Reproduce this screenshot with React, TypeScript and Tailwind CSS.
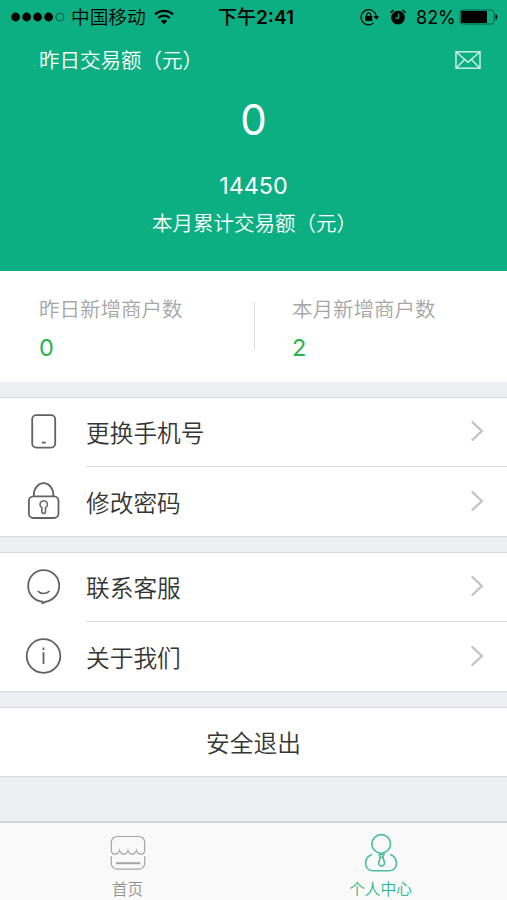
import React from "react";

const Chevron: React.FC = () => (
  <svg className="w-[14px] h-[22px] mr-[23px] mb-[2px]" viewBox="0 0 14 22" fill="none" stroke="#c3c3c5" strokeWidth="2.4">
    <path d="M1.8 1.5 11.8 11 1.8 20.5" />
  </svg>
);

const PhoneIcon: React.FC = () => (
  <svg className="w-[40px] h-[40px]" viewBox="0 0 40 40" fill="none" stroke="#626262" strokeWidth="1.8">
    <rect x="9.2" y="3.2" width="23" height="32.4" rx="4" />
    <path d="M18.7 30.6h4" />
  </svg>
);

const LockIcon: React.FC = () => (
  <svg className="w-[40px] h-[40px]" viewBox="0 0 40 40" fill="none" stroke="#626262" strokeWidth="1.8">
    <rect x="5.9" y="15.4" width="29.6" height="21.6" rx="4.5" />
    <path d="M10.8 15.4v-1.5a9.8 11.7 0 0 1 19.6 0v1.5" />
    <path d="M18.9 26.6a3.7 3.7 0 1 1 3.6 0v4a1.8 1.8 0 0 1-3.6 0z" strokeWidth="1.5" />
  </svg>
);

const ServiceIcon: React.FC = () => (
  <svg className="w-[40px] h-[40px]" viewBox="0 0 40 40" fill="none" stroke="#626262" strokeWidth="1.8">
    <path d="M19.5 36.2v-1.5C11 33.9 5.2 27.4 5.2 19 5.2 9.9 12 3.1 20.6 3.1s15.6 6.8 15.6 15.9c0 7.8-5.6 14-13 15.6z" />
    <path d="M14.7 24c2.7 3.2 9 3.2 11.8 0" strokeWidth="1.5" />
  </svg>
);

const InfoIcon: React.FC = () => (
  <svg className="w-[40px] h-[40px]" viewBox="0 0 40 40" fill="none" stroke="#626262" strokeWidth="1.8">
    <circle cx="20.5" cy="20" r="16.8" />
    <path d="M20.5 16.3v11.8M20.5 11.6v2.3" />
  </svg>
);

const StatusBar: React.FC = () => (
  <div className="flex items-center h-[34px] text-black">
    <svg className="w-[54px] h-[12px] ml-[11px] shrink-0" viewBox="0 0 54 12">
      <circle cx="4.6" cy="6" r="4.4" />
      <circle cx="15.6" cy="6" r="4.4" />
      <circle cx="26.6" cy="6" r="4.4" />
      <circle cx="37.6" cy="6" r="4.4" />
      <circle cx="48.8" cy="6" r="4" fill="none" stroke="#075b46" strokeWidth="1" />
    </svg>
    <span className="ml-[6px] w-[76px] pt-[2px] text-[18.7px] leading-[34px] font-[350] whitespace-nowrap">中国移动</span>
    <svg className="w-[20px] h-[16px] ml-[7px] shrink-0" viewBox="0 0 20 16" fill="none" stroke="black" strokeWidth="2.3">
      <path d="M1 5.4a13 13 0 0 1 18 0M4.3 9a8.2 8.2 0 0 1 11.4 0" />
      <path d="M10 15.2 6.8 12a4.6 4.6 0 0 1 6.4 0z" fill="black" stroke="none" />
    </svg>
    <span className="ml-[44px] w-[80px] pt-[2px] text-[19px] font-medium leading-[34px] whitespace-nowrap">
      下午<span className="font-semibold">2:41</span>
    </span>
    <svg className="w-[20px] h-[18px] ml-[62px] shrink-0" viewBox="0 0 20 18" fill="none" stroke="black" strokeWidth="1.2">
      <path d="M13.8 14.9A7.6 7.6 0 1 1 16.3 9" />
      <path d="M13.4 8.3h5.8l-2.9 3.4z" fill="black" stroke="none" />
      <rect x="5.2" y="8" width="7" height="5" fill="black" stroke="none" />
      <path d="M6.8 8V6.7a1.9 1.9 0 0 1 3.8 0V8" />
    </svg>
    <svg className="w-[18px] h-[18px] ml-[9px] shrink-0" viewBox="0 0 18 18">
      <circle cx="9" cy="9.7" r="6.9" />
      <path d="M1.6 4.6 4.5 2M16.4 4.6 13.5 2" stroke="black" strokeWidth="1.6" />
      <path d="M9.6 5.6v4.5H6.2" fill="none" stroke="#0caf81" strokeWidth="1.3" />
    </svg>
    <span className="ml-[9px] w-[40px] pt-[1px] text-[18px] leading-[34px]">82%</span>
    <svg className="w-[40px] h-[16px] ml-[3px] shrink-0" viewBox="0 0 40 16">
      <rect x="1" y="1" width="34" height="14" rx="2.5" fill="none" stroke="#075b46" strokeWidth="1" />
      <rect x="2" y="2" width="26" height="12" rx="1" />
      <path d="M36.5 5.2c2.6.5 2.6 5.1 0 5.6z" />
    </svg>
  </div>
);

const Summary: React.FC = () => (
  <header className="flex flex-col h-[271px] bg-[#0caf81] text-white">
    <StatusBar />
    <div className="flex items-center justify-between h-[50px] pl-[39px] pr-[26px]">
      <h1 className="font-['Noto_Sans_CJK_SC',sans-serif] text-[20.5px] leading-[50px] font-[350]">昨日交易额（元）</h1>
      <svg className="w-[26px] h-[20px] mt-[1px]" viewBox="0 0 26 20" fill="none" stroke="#d5f4ea" strokeWidth="1.4">
        <rect x="1" y="1.8" width="24" height="16.4" />
        <path d="M1 1.8 13 12.2 25 1.8M1 18.2 9.6 9.4M25 18.2 16.4 9.4" />
      </svg>
    </div>
    <div className="mt-[9px] h-[52px] text-center text-[42px] leading-[54px] font-normal">0</div>
    <div className="mt-[24px] h-[32px] text-center text-[23.3px] leading-[33px]">14450</div>
    <div className="mt-[5px] pl-[2px] text-center font-['Noto_Sans_CJK_SC',sans-serif] text-[20.5px] leading-[32px] font-[350]">
      本月累计交易额（元）
    </div>
  </header>
);

const Stats: React.FC = () => {
  const stats = [
    { label: "昨日新增商户数", value: "0" },
    { label: "本月新增商户数", value: "2" },
  ];

  return (
    <section className="flex items-start h-[111px] bg-white">
      {stats.map((stat, index) => (
        <React.Fragment key={stat.label}>
          {index > 0 && <div className="w-px h-[48px] mt-[31px] bg-[#dcdcdc]" />}
          <div className={`pt-[23px] ${index === 0 ? "w-[254px] pl-[39px]" : "flex-1 pl-[37px]"}`}>
            <div className="text-[20.5px] leading-[32px] font-[350] text-[#a6a6a6]">{stat.label}</div>
            <div className="mt-[5px] text-[23.5px] leading-[34px] text-[#2bb24c]">{stat.value}</div>
          </div>
        </React.Fragment>
      ))}
    </section>
  );
};

interface MenuItem {
  label: string;
  icon: React.ReactNode;
}

const MenuGroup: React.FC<{ items: MenuItem[] }> = ({ items }) => (
  <section className="h-[140px] mt-[15px] bg-white border-y border-[#d9dadd]">
    {items.map((item, index) => (
      <div key={item.label} className="flex items-center h-[69px]">
        <div className="w-[86px] pl-[23px] mb-[2px]">{item.icon}</div>
        <div
          className={`flex flex-1 items-center justify-between h-[69px] ${
            index < items.length - 1 ? "border-b border-[#d9dadd]" : ""
          }`}
        >
          <span className="pt-[4px] text-[23.7px] font-[350] text-[#353535]">{item.label}</span>
          <Chevron />
        </div>
      </div>
    ))}
  </section>
);

const TabBar: React.FC = () => (
  <nav className="flex h-[79px] mt-auto bg-[#f9f9f9] border-t-2 border-[#d3d3d5]">
    <div className="flex flex-col items-center w-[255px] pt-[10px] text-[#929292]">
      <svg className="w-[40px] h-[40px] shrink-0" viewBox="0 0 40 40" fill="none" stroke="#a5a5a5" strokeWidth="1.2">
        <path d="M3.3 17V9.3a5.8 5.8 0 0 1 5.8-5.8h21.8A5.8 5.8 0 0 1 36.7 9.3V17c0 5.5-7 5.5-8.3.4-1.4 5-7 5-8.4 0-1.4 5-7 5-8.4 0-1.3 5.1-8.3 5.1-8.3-.4z" />
        <path d="M3.3 23.3v7a5.8 5.8 0 0 0 5.8 5.8h21.8a5.8 5.8 0 0 0 5.8-5.8v-7" />
        <path d="M7.8 30.2h24.5" strokeWidth="2" />
      </svg>
      <span className="mt-[6px] text-[15.5px] leading-[22px] font-[350]">首页</span>
    </div>
    <div className="flex flex-col items-center flex-1 pt-[10px] text-[#27b587]">
      <svg className="w-[40px] h-[40px] shrink-0" viewBox="0 0 40 40" fill="none" stroke="#4abf98" strokeWidth="1.6">
        <circle cx="20.2" cy="10.9" r="9.3" />
        <path d="M11 21.4C7.2 22.6 4.6 26 4.6 30.2c0 4.6 3.1 7.6 7.5 7.6h15.8c4.4 0 7.5-3 7.5-7.6 0-4.2-2.5-7.6-6.2-8.8" />
        <path d="M18.2 21.4h4.8l-1.1 2.8h-2.6zM19.3 24.2l-1.6 5.2c-.4 2.2 1.2 3.7 2.9 3.7s3.3-1.5 2.9-3.7l-1.6-5.2" />
      </svg>
      <span className="mt-[6px] pr-[1px] text-[15.7px] leading-[22px] font-[350]">个人中心</span>
    </div>
  </nav>
);

const App: React.FC = () => (
  <div className="flex flex-col w-[507px] h-[900px] overflow-hidden bg-[#eeeff3] font-[Inter,'Noto_Sans_CJK_SC',sans-serif]">
    <Summary />
    <Stats />
    <MenuGroup
      items={[
        { label: "更换手机号", icon: <PhoneIcon /> },
        { label: "修改密码", icon: <LockIcon /> },
      ]}
    />
    <MenuGroup
      items={[
        { label: "联系客服", icon: <ServiceIcon /> },
        { label: "关于我们", icon: <InfoIcon /> },
      ]}
    />
    <button className="h-[70px] mt-[15px] pt-[3px] bg-white border-y border-[#d9dadd] text-[23.7px] font-[350] text-[#353535]">
      安全退出
    </button>
    <TabBar />
  </div>
);

export default App;
